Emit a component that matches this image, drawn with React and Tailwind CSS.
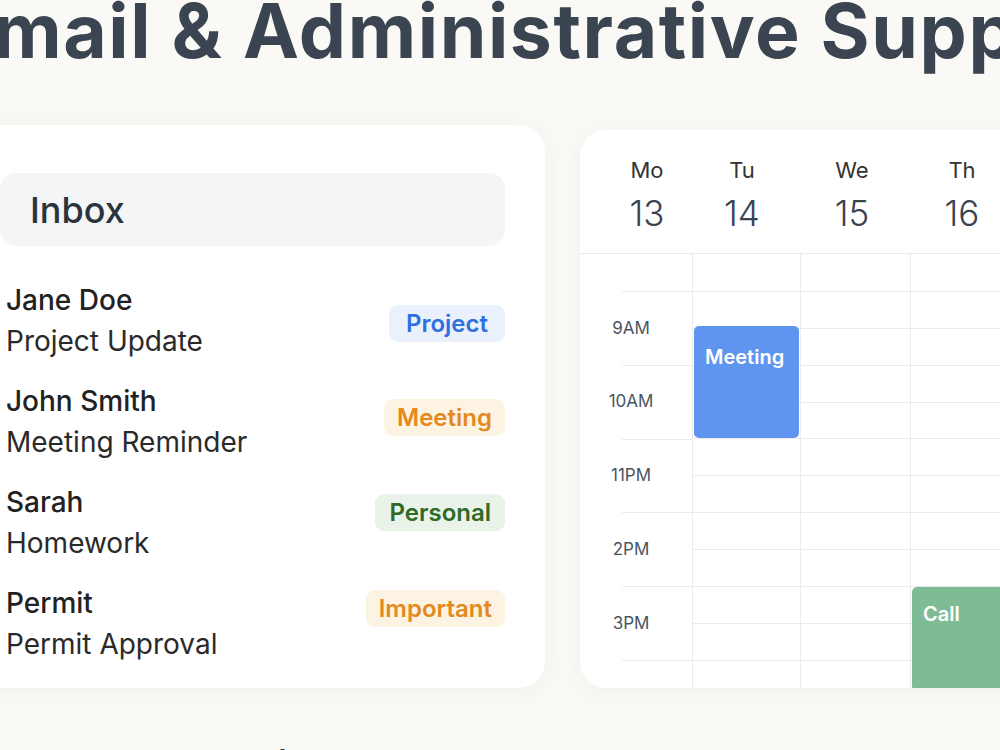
import { useMemo } from "react";

const EMAILS = [
  { id: 1, from: "Jane Doe", subject: "Project Update", tag: "Project", tone: "blue", offset: "mt-[25px] px-[17px]" },
  { id: 2, from: "John Smith", subject: "Meeting Reminder", tag: "Meeting", tone: "amber", offset: "mt-[18px] px-[13px]" },
  { id: 3, from: "Sarah", subject: "Homework", tag: "Personal", tone: "green", offset: "mt-[12px] px-[14px]" },
  { id: 4, from: "Permit", subject: "Permit Approval", tag: "Important", tone: "amber", offset: "mt-[7px] px-[13px]" },
];

const TAG_STYLES = {
  blue: "bg-[#eaf1fd] text-[#2f6fde]",
  amber: "bg-[#fdf3e2] text-[#e3891d]",
  green: "bg-[#e9f3ea] text-[#2f6a27]",
};

const DAYS = [
  { label: "Mo", date: 13, pad: "pl-[22px]" },
  { label: "Tu", date: 14, pad: "pr-[8px]" },
  { label: "We", date: 15, pad: "pr-[6px]" },
  { label: "Th", date: 16, pad: "pr-[6px]" },
  { label: "Fr", date: 17, pad: "" },
];

const TIMES = ["9AM", "10AM", "11PM", "2PM", "3PM"];

// column widths of the week grid, time column first
const COLS = ["w-[112px]", "w-[108px]", "w-[110px]", "w-[110px]", "w-[110px]"];

function Badge({ tone, children, className }) {
  return (
    <span
      className={`inline-flex h-[37px] items-center rounded-[9px] text-[24px] font-semibold leading-none ${TAG_STYLES[tone]} ${className}`}
    >
      {children}
    </span>
  );
}

function InboxCard() {
  return (
    <section className="-ml-[40px] h-[563px] w-[585px] shrink-0 rounded-[26px] bg-white pl-[40px] pr-[40px] pt-[48px] shadow-[0_4px_24px_rgba(60,50,30,0.05)]">
      <div className="flex h-[73px] items-center rounded-[16px] bg-[#f4f5f7] pl-[30px]">
        <h2 className="text-[36px] font-medium leading-none text-[#2b333d]">Inbox</h2>
      </div>
      <ul className="mt-[34px] flex flex-col gap-[19px] pl-[6px]">
        {EMAILS.map((mail) => (
          <li key={mail.id} className="flex h-[82px] items-start justify-between">
            <div className="text-[28px] leading-[41px] text-[#222]">
              <p className="font-medium">{mail.from}</p>
              <p className="text-[#2a2a2a]">{mail.subject}</p>
            </div>
            <Badge tone={mail.tone} className={mail.offset}>
              {mail.tag}
            </Badge>
          </li>
        ))}
      </ul>
    </section>
  );
}

function DayColumn({ width, children }) {
  // 11 slots of ~37px below the header line, last one clipped by the card
  const slots = useMemo(() => Array.from({ length: 12 }, (_, i) => i), []);
  return (
    <div className={`relative ${width} shrink-0 border-l border-[#ebebeb]`}>
      {slots.map((i) => (
        <div key={i} className={`h-[36.9px] ${i > 0 ? "border-t border-[#ebebeb]" : ""}`} />
      ))}
      {children}
    </div>
  );
}

function CalendarCard() {
  return (
    <section className="mt-[5px] h-[558px] w-[500px] shrink-0 overflow-hidden rounded-[26px] bg-white shadow-[0_4px_24px_rgba(60,50,30,0.05)]">
      <div className="flex border-b border-[#ebebeb] pt-[26px] pb-[20px]">
        {DAYS.map((d, i) => (
          <div key={d.label} className={`${COLS[i]} ${d.pad} shrink-0 text-center`}>
            <p className="text-[22px] leading-[28px] text-[#333]">{d.label}</p>
            <p className="mt-[9px] text-[35px] font-light leading-[40px] text-[#3a4350]">{d.date}</p>
          </div>
        ))}
      </div>

      <div className="flex">
        <div className="w-[112px] shrink-0">
          <div className="h-[37px]" />
          {TIMES.map((t) => (
            <div key={t} className="flex h-[73.8px] flex-col">
              <div className="ml-[42px] border-t border-[#ebebeb]" />
              <div className="flex flex-1 items-center">
                <span className="w-[102px] text-center text-[17px] text-[#4b5563]">{t}</span>
              </div>
            </div>
          ))}
          <div className="ml-[42px] border-t border-[#ebebeb]" />
        </div>

        <DayColumn width={COLS[1]}>
          <div className="absolute left-px right-px top-[72px] h-[112px] rounded-[5px] bg-[#5f95ee] px-[11px] pt-[16px] text-[20px] font-semibold text-white">
            Meeting
          </div>
        </DayColumn>
        <DayColumn width={COLS[2]} />
        <DayColumn width={COLS[3]}>
          <div className="absolute left-px right-[-4px] top-[333px] h-[104px] rounded-[5px] bg-[#7fbc96] px-[11px] pt-[12px] text-[20px] font-semibold text-white">
            Call
          </div>
        </DayColumn>
        <DayColumn width={COLS[4]} />
      </div>
    </section>
  );
}

export default function App() {
  return (
    <div className="h-[750px] w-[1000px] overflow-hidden bg-[#faf9f5] font-['Inter',sans-serif]">
      <h1 className="-ml-[54px] -mt-[7px] whitespace-nowrap text-[75px] font-bold leading-[75px] tracking-[1.6px] text-[#3b4451]">
        Email &amp; Administrative Support
      </h1>

      <div className="mt-[57px] flex gap-[35px]">
        <InboxCard />
        <CalendarCard />
      </div>

      <h2 className="ml-[200px] mt-[56px] whitespace-nowrap text-[46px] font-bold leading-none text-[#2b2f36]">
        Which Tasks We Handle
      </h2>
    </div>
  );
}
